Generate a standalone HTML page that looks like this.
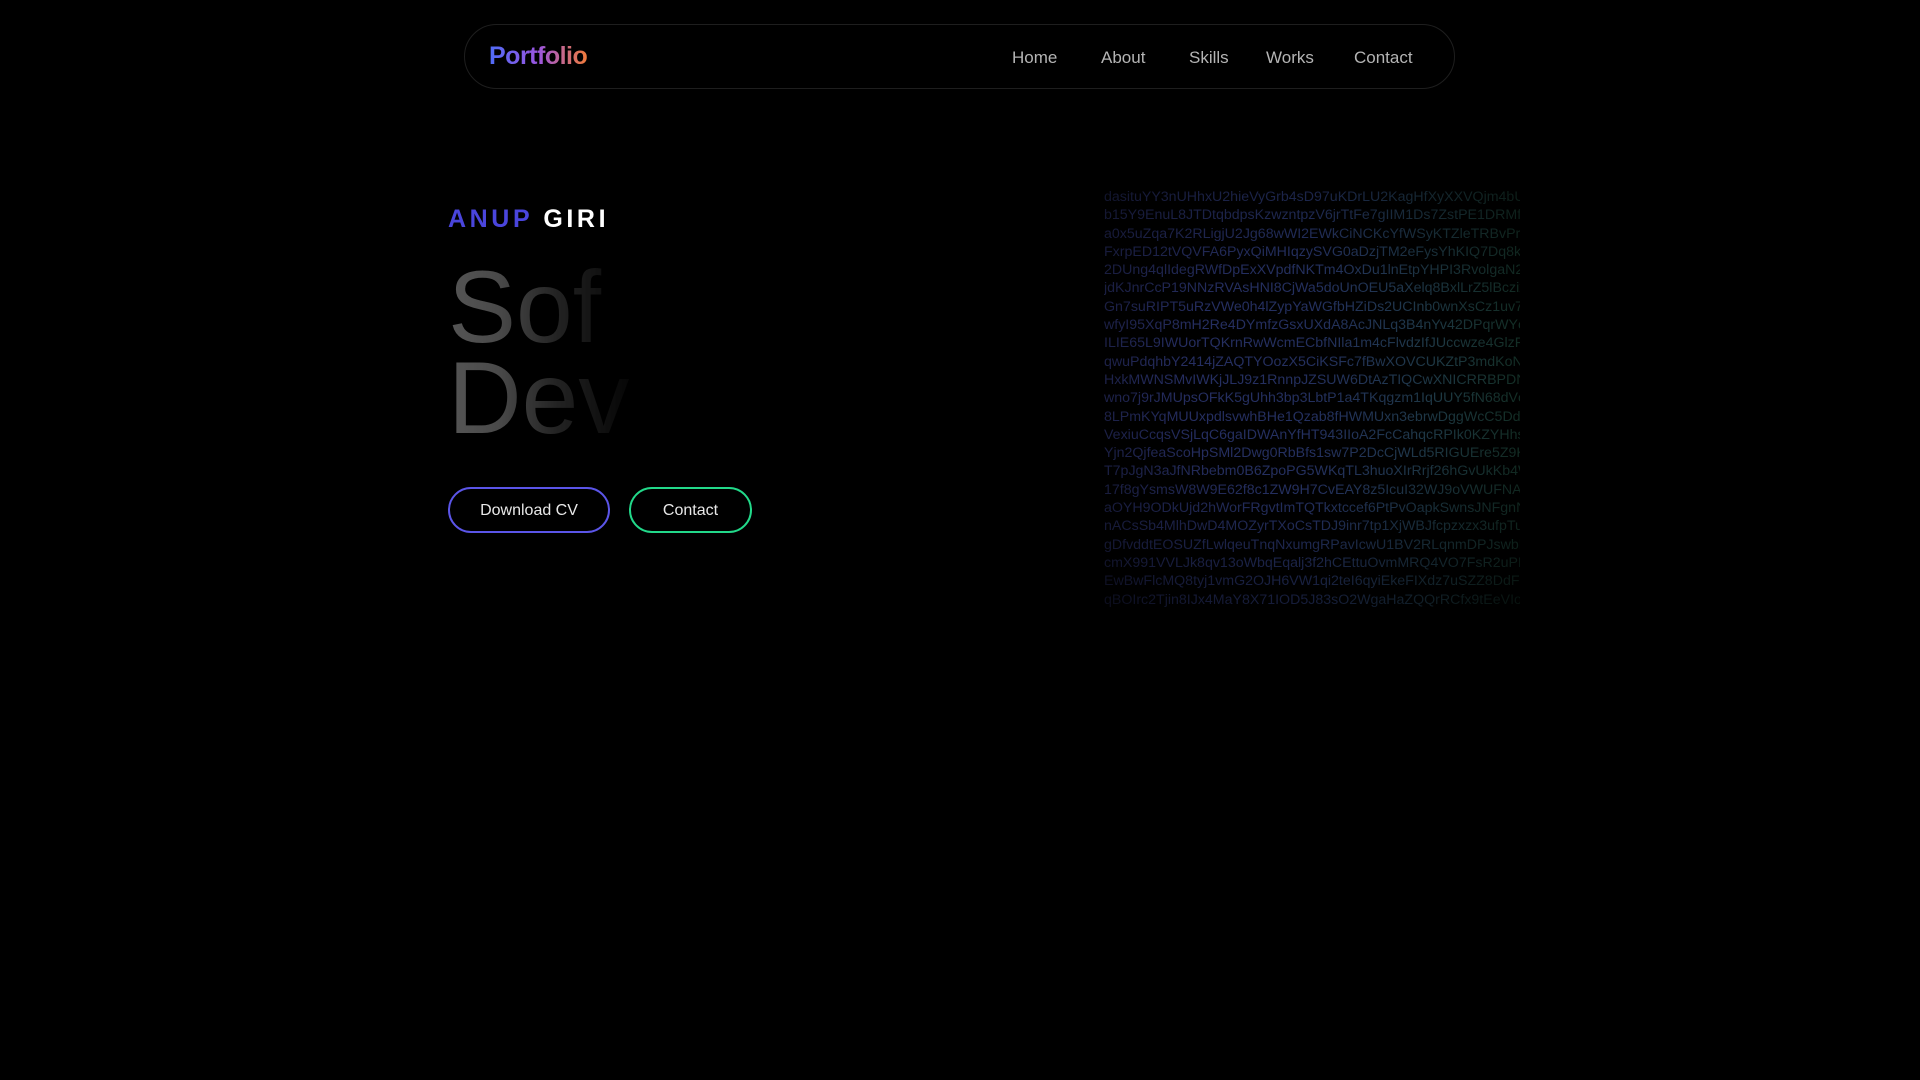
<!DOCTYPE html>
<html><head><meta charset="utf-8"><style>
html,body{margin:0;background:#000;width:1920px;height:1080px;overflow:hidden;font-family:"Liberation Sans",sans-serif}
.nav{position:absolute;left:464px;top:24px;width:989px;height:63px;border:1px solid #1e1e1e;border-radius:33px}
.logo{position:absolute;left:24px;top:17px;font-size:25px;font-weight:bold;letter-spacing:-0.5px;background:linear-gradient(90deg,#4f6cf7,#9a55e0 50%,#f07a3a);-webkit-background-clip:text;background-clip:text;color:transparent}
.links{position:absolute;top:23px;font-size:17px;color:#b4b4b4}
.links span{position:absolute;white-space:nowrap}
.name{position:absolute;left:448px;top:205px;font-size:25px;font-weight:bold;letter-spacing:3.6px}
.big{position:absolute;left:448px;top:262px;font-size:102px;line-height:91px;background:linear-gradient(90deg,#555 0,#4a4a4a 50px,#222 110px,#0a0a0a 170px,#000 200px);-webkit-background-clip:text;background-clip:text;color:transparent}
.btn{position:absolute;top:487px;height:42px;border:2px solid;border-radius:24px;color:#e8e8e8;font-size:16px;text-align:center;line-height:44px}
.mat{position:absolute;left:1104px;top:188px;width:416px;height:420px;overflow:hidden;font-size:14.2px;line-height:18.3px;white-space:nowrap;
-webkit-mask-image:radial-gradient(ellipse 75% 70% at 50% 45%,rgba(0,0,0,.85) 40%,rgba(0,0,0,.45) 85%,rgba(0,0,0,.25) 100%);
background:linear-gradient(90deg,#2e3575,#2a3870 50%,#1f4a3c);-webkit-background-clip:text;background-clip:text;color:transparent}
</style></head><body>
<div class="nav"><div class="logo">Portfolio</div>
<div class="links"><span style="left:547px">Home</span><span style="left:636px">About</span><span style="left:724px">Skills</span><span style="left:801px">Works</span><span style="left:889px">Contact</span></div></div>
<div class="name"><span style="color:#4a45dc">ANUP</span> <span style="color:#fff">GIRI</span></div>
<div class="big">Sof<br>Dev</div>
<div class="btn" style="left:448px;width:158px;border-color:#5b55e8">Download CV</div>
<div class="btn" style="left:629px;width:119px;border-color:#22d98a">Contact</div>
<div class="mat">
dasituYY3nUHhxU2hieVyGrb4sD97uKDrLU2KagHfXyXXVQjm4bUAUq<br>
b15Y9EnuL8JTDtqbdpsKzwzntpzV6jrTtFe7gIIM1Ds7ZstPE1DRMfa9yhyeij<br>
a0x5uZqa7K2RLigjU2Jg68wWI2EWkCiNCKcYfWSyKTZleTRBvPrSZMjvkK<br>
FxrpED12tVQVFA6PyxQiMHIqzySVG0aDzjTM2eFysYhKIQ7Dq8k5pFZ3GH<br>
2DUng4qlIdegRWfDpExXVpdfNKTm4OxDu1lnEtpYHPI3RvolgaN251mOc<br>
jdKJnrCcP19NNzRVAsHNI8CjWa5doUnOEU5aXelq8BxlLrZ5lBczixjbhc6ID<br>
Gn7suRIPT5uRzVWe0h4lZypYaWGfbHZiDs2UCInb0wnXsCz1uv7s2ndfcl<br>
wfyI95XqP8mH2Re4DYmfzGsxUXdA8AcJNLq3B4nYv42DPqrWYcWOieG<br>
ILIE65L9IWUorTQKrnRwWcmECbfNIla1m4cFlvdzIfJUccwze4GlzFwxK3KE<br>
qwuPdqhbY2414jZAQTYOozX5CiKSFc7fBwXOVCUKZtP3mdKoNpjA9Jy4<br>
HxkMWNSMvIWKjJLJ9z1RnnpJZSUW6DtAzTIQCwXNICRRBPDN0hyZK0cr<br>
wno7j9rJMUpsOFkK5gUhh3bp3LbtP1a4TKqgzm1IqUUY5fN68dVcytE28<br>
8LPmKYqMUUxpdlsvwhBHe1Qzab8fHWMUxn3ebrwDggWcC5DdubEH<br>
VexiuCcqsVSjLqC6gaIDWAnYfHT943IIoA2FcCahqcRPIk0KZYHhs2hhxG<br>
Yjn2QjfeaScoHpSMl2Dwg0RbBfs1sw7P2DcCjWLd5RIGUEre5Z9KvfvPJQ<br>
T7pJgN3aJfNRbebm0B6ZpoPG5WKqTL3huoXIrRrjf26hGvUkKb4WhYTK<br>
17f8gYsmsW8W9E62f8c1ZW9H7CvEAY8z5IcuI32WJ9oVWUFNAoidbuqF<br>
aOYH9ODkUjd2hWorFRgvtImTQTkxtccef6PtPvOapkSwnsJNFgnNFkb4y<br>
nACsSb4MlhDwD4MOZyrTXoCsTDJ9inr7tp1XjWBJfcpzxzx3ufpTuUzJFH<br>
gDfvddtEOSUZfLwlqeuTnqNxumgRPavIcwU1BV2RLqnmDPJswbLBgrgp<br>
cmX991VVLJk8qv13oWbqEqalj3f2hCEttuOvmMRQ4VO7FsR2uPBk25UQ<br>
EwBwFlcMQ8tyj1vmG2OJH6VW1qi2teI6qyiEkeFIXdz7uSZZ8DdF5yjE460<br>
qBOIrc2Tjin8IJx4MaY8X71IOD5J83sO2WgaHaZQQrRCfx9tEeVIoyB953fy
</div>
</body></html>
